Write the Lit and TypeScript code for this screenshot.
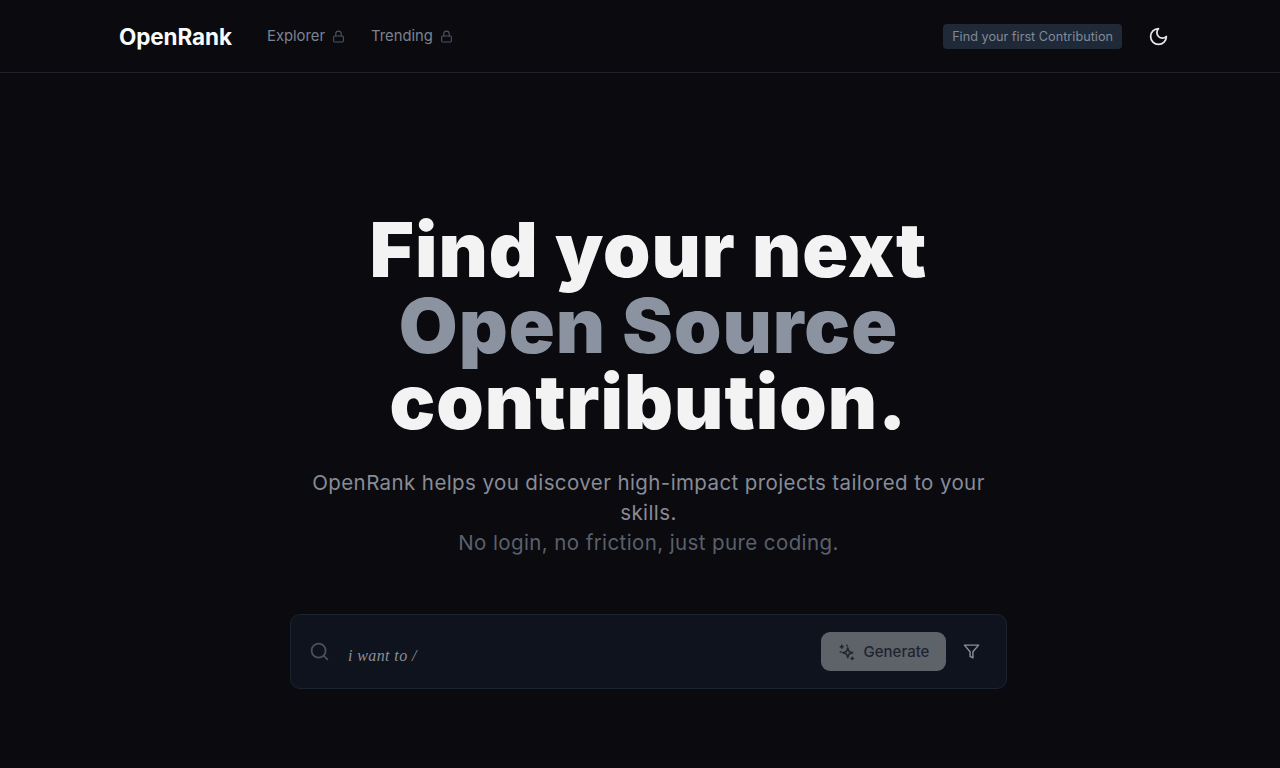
import { LitElement, html, css, svg } from "lit";
import { customElement } from "lit/decorators.js";

const icon = (size: number, body: unknown, cls = "") => html`<svg
  class=${cls}
  width=${size}
  height=${size}
  viewBox="0 0 24 24"
  fill="none"
  stroke="currentColor"
  stroke-width="2"
  stroke-linecap="round"
  stroke-linejoin="round"
>${body}</svg>`;

const lock = svg`<rect x="3" y="11" width="18" height="11" rx="2"/><path d="M7 11V7a5 5 0 0 1 10 0v4"/>`;
const moon = svg`<path d="M12 3a6 6 0 0 0 9 9 9 9 0 1 1-9-9Z"/>`;
const search = svg`<circle cx="11" cy="11" r="8"/><path d="m21 21-4.3-4.3"/>`;
const filter = svg`<polygon points="22 3 2 3 10 12.46 10 19 14 21 14 12.46 22 3"/>`;
const sparkles = svg`<path d="M13 6.5 11.6 10.6a1.5 1.5 0 0 1-1 1L6.5 13l4.1 1.4a1.5 1.5 0 0 1 1 1L13 19.5l1.4-4.1a1.5 1.5 0 0 1 1-1l4.1-1.4-4.1-1.4a1.5 1.5 0 0 1-1-1Z"/><path d="M5 3v4M3 5h4M19 19v3M17.5 20.5h3M3 12h1M12 3v1"/>`;

@customElement("app-root")
export class AppRoot extends LitElement {
  static styles = css`
    :host {
      display: block;
      height: 768px;
      overflow: hidden;
      background: #0a0a0f;
      font-family: Inter, "Liberation Sans", sans-serif;
    }

    .nav {
      height: 73px;
      box-sizing: border-box;
      padding: 0 111px 0 119px;
      display: flex;
      align-items: center;
      justify-content: space-between;
      border-bottom: 1px solid #1e222b;
    }

    .nav__left,
    .nav__right,
    .nav__link {
      display: flex;
      align-items: center;
    }

    .logo {
      font-size: 22.5px;
      font-weight: 700;
      letter-spacing: -0.1px;
      color: #f9fafb;
      width: 148px;
    }

    .nav__link {
      gap: 7px;
      margin-right: 26px;
      font-size: 14.8px;
      color: #7b8391;
    }

    .nav__link svg {
      color: #4b5563;
    }

    .badge {
      height: 25px;
      box-sizing: border-box;
      padding: 0 9px;
      display: flex;
      align-items: center;
      font-size: 12.7px;
      color: #7f8a9a;
      background: #1f2937;
      border-radius: 4px;
      margin-right: 26px;
    }

    .theme {
      color: #e5e7eb;
      display: flex;
    }

    .hero {
      display: flex;
      flex-direction: column;
      align-items: center;
      padding: 138px 0 0 17px;
    }

    h1 {
      margin: 0;
      font-size: 76px;
      line-height: 76px;
      font-weight: 900;
      letter-spacing: 1px;
      color: #f3f3f3;
      text-align: center;
    }

    h1 span {
      display: block;
    }

    h1 .accent {
      color: #8b92a0;
    }

    .lead {
      margin: 29px 0 0;
      width: 700px;
      font-size: 20.5px;
      line-height: 30px;
      letter-spacing: 0.4px;
      color: #878c97;
      text-align: center;
    }

    .lead span {
      display: block;
      color: #5a606c;
    }

    .search {
      margin: 56px 0 0 0;
      width: 717px;
      height: 75px;
      box-sizing: border-box;
      padding: 0 26px 0 18px;
      display: flex;
      align-items: center;
      background: #0f131e;
      border: 1px solid #1c2330;
      border-radius: 10px;
    }

    .search__icon {
      color: #4b5058;
    }

    .search__text {
      flex: 1;
      margin: 8px 0 0 18px;
      font-family: "Liberation Serif", serif;
      font-style: italic;
      font-size: 16px;
      letter-spacing: 0.4px;
      color: #8a8f98;
    }

    .generate {
      width: 125px;
      height: 39px;
      display: flex;
      align-items: center;
      justify-content: center;
      gap: 8px;
      background: #5e6269;
      border-radius: 9px;
      font-size: 15px;
      font-weight: 500;
      color: #1f2430;
      margin-right: 17px;
    }

    .filter {
      display: flex;
      color: #8b8f97;
    }
  `;

  render() {
    return html`
      <header class="nav">
        <div class="nav__left">
          <div class="logo">OpenRank</div>
          <div class="nav__link">Explorer ${icon(13, lock)}</div>
          <div class="nav__link">Trending ${icon(13, lock)}</div>
        </div>
        <div class="nav__right">
          <div class="badge">Find your first Contribution</div>
          <div class="theme">${icon(21, moon)}</div>
        </div>
      </header>
      <main class="hero">
        <h1>
          <span>Find your next</span>
          <span class="accent">Open Source</span>
          <span>contribution.</span>
        </h1>
        <p class="lead">
          OpenRank helps you discover high-impact projects tailored to your skills.
          <span>No login, no friction, just pure coding.</span>
        </p>
        <div class="search">
          ${icon(21, search, "search__icon")}
          <div class="search__text">i want to /</div>
          <div class="generate">${icon(18, sparkles)} Generate</div>
          <div class="filter">${icon(17, filter)}</div>
        </div>
      </main>
    `;
  }
}
